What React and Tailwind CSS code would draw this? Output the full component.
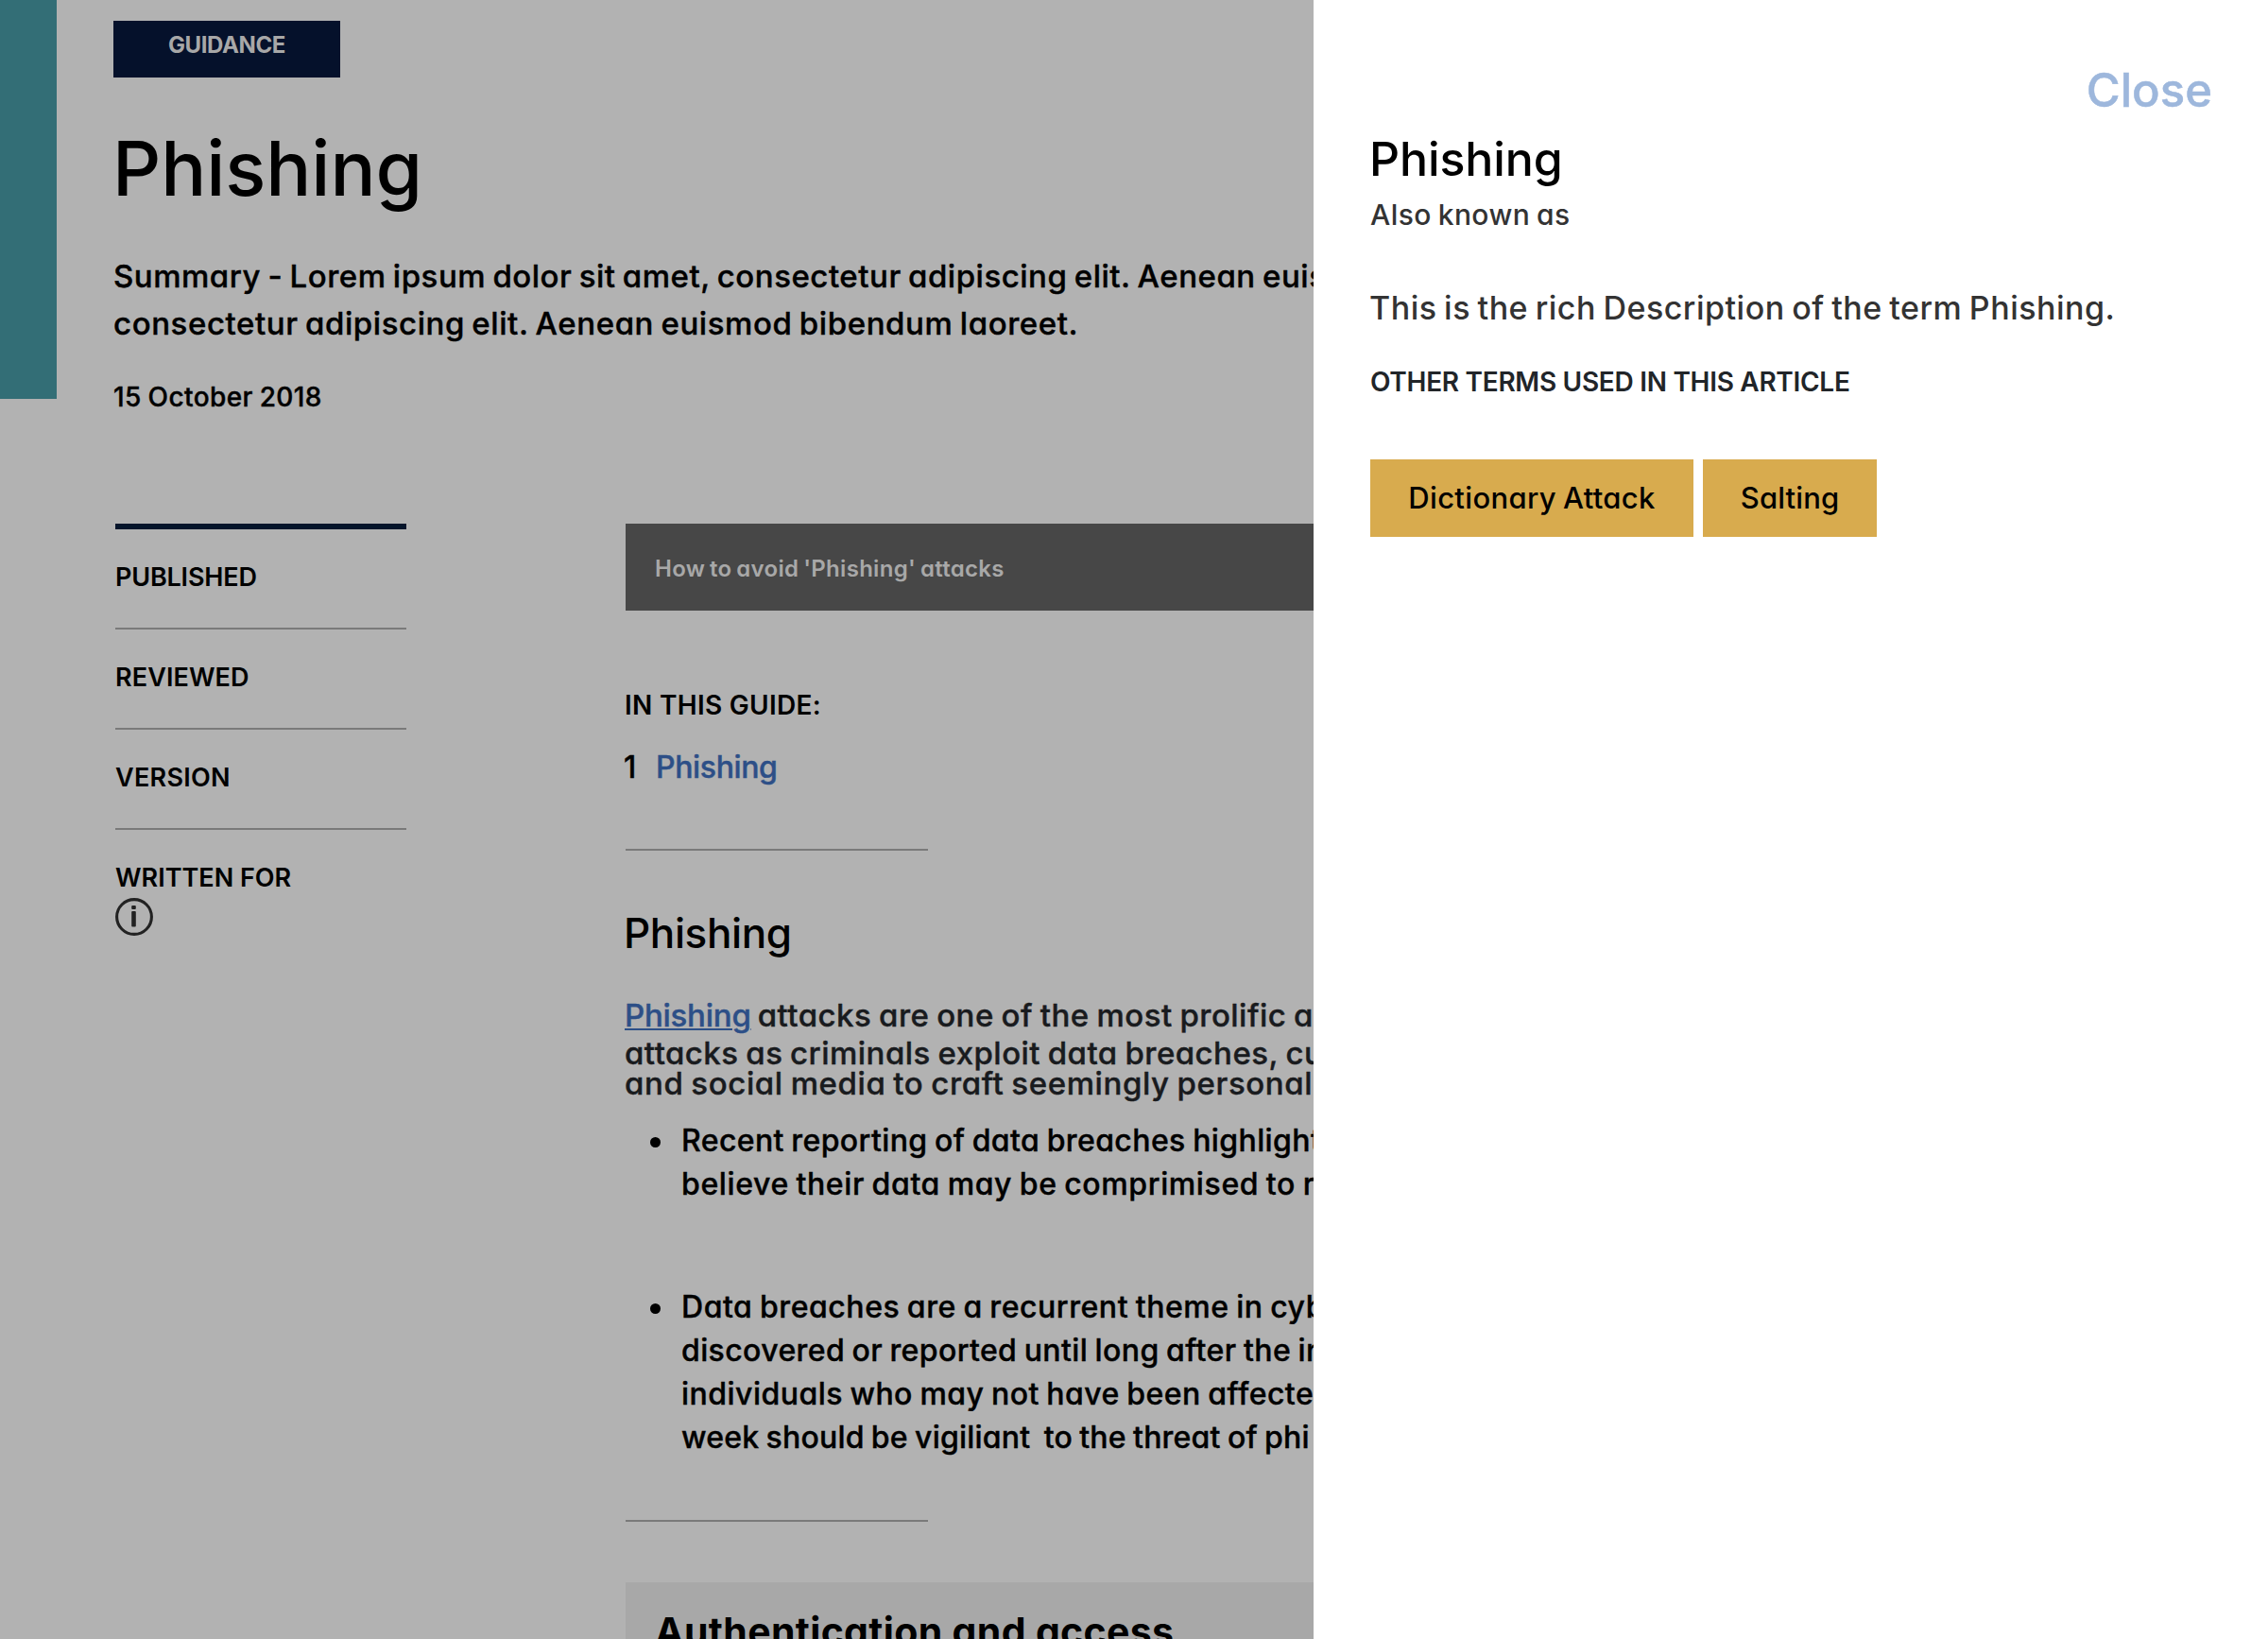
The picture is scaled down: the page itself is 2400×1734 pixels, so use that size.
const META = [
  ['PUBLISHED', 'tracking-[-0.185px]'],
  ['REVIEWED', 'tracking-[0.096px]'],
  ['VERSION', 'tracking-[0.266px]'],
];

const POINTS = [
  {
    gap: 'mt-[25px]',
    lines: [
      ['Recent reporting of data breaches highlight', 'tracking-[0.4px]'],
      ['believe their data may be comprimised to r', 'tracking-[0.62px]'],
    ],
  },
  {
    gap: 'mt-[84px]',
    lines: [
      ['Data breaches are a recurrent theme in cyb', 'tracking-[0.55px]'],
      ['discovered or reported until long after the in', 'tracking-[0.39px]'],
      ['individuals who may not have been affected', 'tracking-[0.47px]'],
      ['week should be vigiliant  to the threat of phi', 'tracking-[0.2px]'],
    ],
  },
];

function InfoIcon() {
  return (
    <svg className="h-10 w-10" viewBox="0 0 40 40" fill="none" aria-hidden="true">
      <circle cx="20" cy="20" r="18.4" stroke="#222222" strokeWidth="3.1" />
      <rect x="17.2" y="8" width="4.6" height="4" rx="1" fill="#222222" />
      <rect x="17.2" y="14" width="4.6" height="16.4" rx="1" fill="#222222" />
    </svg>
  );
}

function Sidebar() {
  return (
    <aside className="w-[308px] shrink-0 border-t-[6px] border-[#05152b] text-[27px] leading-[42px] font-semibold">
      {META.map(([label, tracking]) => (
        <div key={label} className="border-b-2 border-[#7a7a7a] pt-[30px] pb-[32px]">
          <p className={tracking}>{label}</p>
        </div>
      ))}
      <p className="pt-[30px]">WRITTEN FOR</p>
      <InfoIcon />
    </aside>
  );
}

function Guide() {
  return (
    <section className="ml-[232px] w-[728px] shrink-0">
      <div className="h-[92px] bg-[#474747] pt-[30px] pl-[31px] text-2xl leading-9 font-semibold tracking-[0.3px] [word-spacing:-1.5px] text-[#a8a8a8]">
        How to avoid 'Phishing' attacks
      </div>
      <h3 className="mt-[79px] -ml-px text-[28px] leading-[42px] font-semibold tracking-[0.3px]">IN THIS GUIDE:</h3>
      <div className="mt-[21px] -ml-0.5 flex text-[32px] leading-[48px] font-medium [-webkit-text-stroke:0.4px]">
        <span className="w-[34px]">1</span>
        <a className="tracking-[-0.363px] text-[#2d4f87]">Phishing</a>
      </div>
      <hr className="mt-[62px] w-80 border-t-2 border-[#7a7a7a]" />
      <h2 className="mt-[54px] -ml-0.5 text-[44px] leading-[66px] font-medium tracking-[-0.4px]">Phishing</h2>
      <div className="mt-[33px] -ml-px text-[33px] font-medium [-webkit-text-stroke:0.4px] text-[#191b1e] [word-spacing:-1.5px]">
        <p className="flex leading-[42px]">
          <a className="w-[142px] tracking-[-0.25px] text-[#2d4f87] underline decoration-2 underline-offset-[2px]">Phishing</a>
          <span className="tracking-[0.48px]">attacks are one of the most prolific a</span>
        </p>
        <p className="leading-[38px] tracking-[0.46px]">attacks as criminals exploit data breaches, cu</p>
        <p className="leading-[26px] tracking-[0.6px]">and social media to craft seemingly personal</p>
      </div>
      <ul className="text-[32px] leading-[46px] font-medium [-webkit-text-stroke:0.4px] [word-spacing:-1.5px]">
        {POINTS.map(({ gap, lines }) => (
          <li key={lines[0][0]} className={`flex ${gap}`}>
            <span className="mt-[19px] mr-[22px] ml-[26px] h-[11px] w-[11px] shrink-0 rounded-full bg-black" />
            <div className="whitespace-pre">
              {lines.map(([text, tracking]) => (
                <p key={text} className={tracking}>{text}</p>
              ))}
            </div>
          </li>
        ))}
      </ul>
      <hr className="mt-16 w-80 border-t-2 border-[#7a7a7a]" />
      <div className="mt-16 h-[200px] bg-[#a8a8a8] pt-[22px] pl-[31px] text-[41px] leading-[60px] font-bold tracking-[0.35px]">
        Authentication and access
      </div>
    </section>
  );
}

function Article() {
  return (
    <main className="flex h-full w-[1390px] shrink-0 overflow-hidden bg-[#b2b2b2] whitespace-nowrap">
      <div className="h-[422px] w-[60px] shrink-0 bg-[#336e76]" />
      <div className="shrink-0 pt-[22px] pl-[60px]">
        <div className="h-[60px] w-60 bg-[#05112b] text-center text-2xl leading-[52px] font-bold tracking-[-0.4px] text-[#a8a8a8]">
          GUIDANCE
        </div>
        <h1 className="mt-[36px] -ml-px text-[80px] leading-[120px] font-medium tracking-[-0.1px]">Phishing</h1>
        <div className="mt-[29px] text-[33px] leading-[50px] font-medium [-webkit-text-stroke:0.4px] [word-spacing:-2px]">
          <p className="tracking-[0.52px]">Summary - Lorem ipsum dolor sit amet, consectetur adipiscing elit. Aenean euis</p>
          <p className="tracking-[0.58px]">consectetur adipiscing elit. Aenean euismod bibendum laoreet.</p>
        </div>
        <p className="mt-8 text-[28px] leading-[42px] font-medium [-webkit-text-stroke:0.4px] tracking-[0.4px] [word-spacing:-1px]">15 October 2018</p>
        <div className="mt-[113px] ml-0.5 flex">
          <Sidebar />
          <Guide />
        </div>
      </div>
    </main>
  );
}

function TermPanel() {
  return (
    <aside className="h-full w-[1010px] bg-white pt-[60px] pr-[59px] pl-[60px] whitespace-nowrap">
      <div className="text-right text-[49px] leading-[72px] font-medium [-webkit-text-stroke:0.5px] tracking-[0.05px] text-[#9db7dc]">Close</div>
      <h2 className="mt-[6px] -ml-px text-[50px] leading-[60px] font-medium tracking-[-0.1px]">Phishing</h2>
      <p className="mt-[7px] text-[30px] leading-[45px] font-medium tracking-[0.42px] [word-spacing:-1.5px] text-[#333333]">Also known as</p>
      <p className="mt-[51px] -ml-px text-[34px] leading-[50px] font-medium tracking-[0.5px] [word-spacing:-2px] text-[#333333]">
        This is the rich Description of the term Phishing.
      </p>
      <h3 className="mt-8 text-[28px] leading-[42px] font-semibold tracking-[-0.29px] text-[#212529]">
        OTHER TERMS USED IN THIS ARTICLE
      </h3>
      <div className="mt-[61px] flex gap-2.5 text-[31px] font-medium">
        <button className="h-[82px] w-[342px] bg-[#d8ab4e] tracking-[0.34px] [word-spacing:-1.5px]">Dictionary Attack</button>
        <button className="h-[82px] w-[184px] bg-[#d8ab4e] tracking-[0.1px]">Salting</button>
      </div>
    </aside>
  );
}

export default function App() {
  return (
    <div className="flex h-[1734px] w-[2400px] overflow-hidden font-['Inter',sans-serif] text-black [font-feature-settings:'cv11']">
      <Article />
      <TermPanel />
    </div>
  );
}
